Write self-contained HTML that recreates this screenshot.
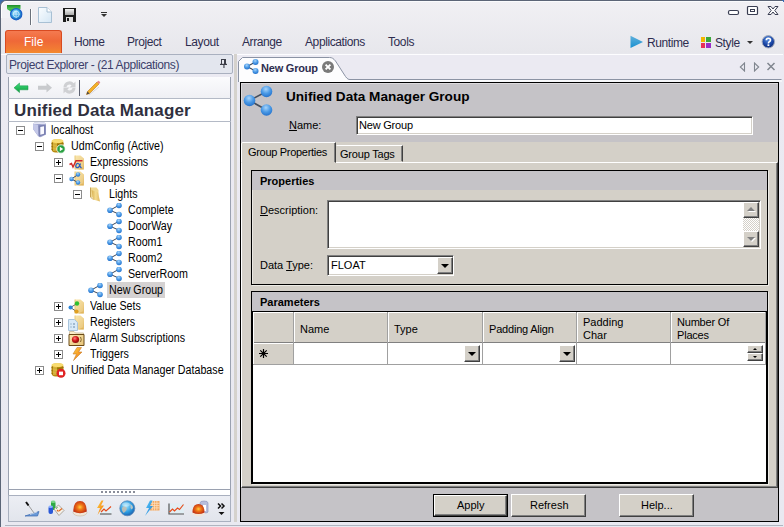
<!DOCTYPE html>
<html><head><meta charset="utf-8">
<style>
*{margin:0;padding:0;box-sizing:border-box}
html,body{width:784px;height:527px;overflow:hidden;background:#e9ebf2;font-family:"Liberation Sans",sans-serif;font-size:11px;color:#000}
.a{position:absolute}
.t{position:absolute;white-space:nowrap;line-height:12px}
#win{left:0;top:0;width:784px;height:527px;background:linear-gradient(#f1f0f4,#e7e7ec 53px,#ebeaf2 55px,#e9e9f1);}
.rt{position:absolute;top:35px;font-size:12px;line-height:14px;color:#2e2d4f;white-space:nowrap;letter-spacing:-0.4px}
.tr{position:absolute;white-space:nowrap;font-size:12px;line-height:12px;color:#000;transform:scaleX(0.89);transform-origin:0 0;margin-top:-1px;margin-left:-0.5px}
.bx{position:absolute;width:9px;height:9px;border:1px solid #8c8c8c;background:#fff}
.bx:before{content:"";position:absolute;left:1px;top:3px;width:5px;height:1px;background:#000}
.bx.p:after{content:"";position:absolute;left:3px;top:1px;width:1px;height:5px;background:#000}
.btn3d{position:absolute;background:#d4d0c8;border:1px solid;border-color:#fff #404040 #404040 #fff;box-shadow:inset -1px -1px 0 #808080}
.sunk{position:absolute;background:#fff;border:1px solid;border-color:#808080 #fff #fff #808080;box-shadow:inset 1px 1px 0 #404040,inset -1px -1px 0 #d4d0c8}
</style></head><body>
<div id="win" class="a"></div>
<svg width="0" height="0" style="position:absolute"><defs><radialGradient id="gb" cx="0.45" cy="0.3" r="0.75"><stop offset="0" stop-color="#a8d4fa"/><stop offset="0.5" stop-color="#4b9ae6"/><stop offset="1" stop-color="#1f6cc8"/></radialGradient><radialGradient id="gr" cx="0.5" cy="0.5" r="0.6"><stop offset="0" stop-color="#ffd040"/><stop offset="0.35" stop-color="#f07818"/><stop offset="1" stop-color="#b82010"/></radialGradient><linearGradient id="go" x1="0" y1="0" x2="1" y2="1"><stop offset="0" stop-color="#ffd040"/><stop offset="1" stop-color="#f07010"/></linearGradient><linearGradient id="gbl" x1="0" y1="0" x2="1" y2="1"><stop offset="0" stop-color="#60d0ff"/><stop offset="1" stop-color="#1878d0"/></linearGradient><radialGradient id="gg" cx="0.4" cy="0.35" r="0.7"><stop offset="0" stop-color="#a8e8ff"/><stop offset="0.6" stop-color="#2a9ae0"/><stop offset="1" stop-color="#1a5aa8"/></radialGradient><linearGradient id="gf" x1="0" y1="0" x2="1" y2="1"><stop offset="0" stop-color="#fae8b0"/><stop offset="1" stop-color="#e8c478"/></linearGradient><linearGradient id="gf2" x1="0" y1="0" x2="1" y2="0"><stop offset="0" stop-color="#d8b050"/><stop offset="0.5" stop-color="#f4dc90"/><stop offset="1" stop-color="#e0b860"/></linearGradient><radialGradient id="gred" cx="0.4" cy="0.35" r="0.7"><stop offset="0" stop-color="#ff8080"/><stop offset="0.5" stop-color="#d01818"/><stop offset="1" stop-color="#800808"/></radialGradient></defs></svg>
<!-- window border -->
<div class="a" style="left:0;top:0;width:8px;height:8px;background:#3a6cb0"></div>
<div class="a" style="left:0;top:0;width:18px;height:18px;background:#f0f1f5;border-top-left-radius:6px;border-top:1px solid #5b6577;border-left:1px solid #5b6577;box-shadow:inset 1px 1px 0 #fff"></div>
<div class="a" style="left:0;top:8px;width:1px;height:519px;background:#5b6577"></div>
<div class="a" style="left:8px;top:0;width:774px;height:1px;background:#5b6577"></div>
<div class="a" style="left:782px;top:0;width:2px;height:2px;background:#3a6cb0"></div>

<!-- quick access -->
<svg class="a" style="left:7px;top:5px" width="17" height="16">
<defs><linearGradient id="ggr" x1="0" y1="0" x2="0" y2="1"><stop offset="0" stop-color="#1c8a2a"/><stop offset="1" stop-color="#50c850"/></linearGradient></defs>
<rect x="0" y="0" width="13.5" height="4" fill="url(#ggr)"/>
<path d="M0 4H6V8Z" fill="#3ab84a"/>
<circle cx="9.2" cy="9.2" r="5.6" fill="url(#gg)" stroke="#1a60c8" stroke-width="1.2"/>
<circle cx="9.2" cy="9.2" r="3" fill="none" stroke="#e8f4ff" stroke-width="0.9" opacity="0.8"/>
<path d="M9.2 5.5V13M5.5 9.2H13" stroke="#e8f4ff" stroke-width="0.7" opacity="0.7"/>
</svg>
<div class="a" style="left:30px;top:9px;width:1px;height:16px;background:#6a707a"></div>
<div class="a" style="left:31px;top:9px;width:1px;height:16px;background:#fff"></div>
<svg class="a" style="left:38px;top:7px" width="14" height="16"><path d="M0.5 0.5H9L13.5 5V15.5H0.5Z" fill="url(#gdoc)" stroke="#a8c0d4" stroke-width="1"/><path d="M9 0.5V5H13.5" fill="#fff" stroke="#a8c0d4" stroke-width="1"/>
<defs><linearGradient id="gdoc" x1="0" y1="0" x2="1" y2="1"><stop offset="0" stop-color="#fafdff"/><stop offset="1" stop-color="#d4e6f4"/></linearGradient></defs></svg>
<svg class="a" style="left:63px;top:8px" width="14" height="14"><path d="M0 0H13V14H0Z" fill="#1c1c1c"/><rect x="2" y="1" width="9" height="6" fill="url(#gsv)"/><rect x="3" y="9" width="7" height="5" fill="#e0e0e0"/><rect x="4" y="10" width="2" height="3" fill="#1c1c1c"/>
<defs><linearGradient id="gsv" x1="0" y1="0" x2="0" y2="1"><stop offset="0" stop-color="#f4f4f4"/><stop offset="1" stop-color="#a8a8a8"/></linearGradient></defs></svg>
<div class="a" style="left:101px;top:12px;width:6px;height:1px;background:#333"></div>
<div class="a" style="left:101px;top:14px;width:0;height:0;border-left:3px solid transparent;border-right:3px solid transparent;border-top:3px solid #333"></div>

<!-- window controls -->
<svg class="a" style="left:727px;top:5px" width="54" height="12">
<rect x="1.5" y="5.5" width="10" height="4" rx="1.5" fill="#fff" stroke="#3a3e52" stroke-width="1.2"/>
<rect x="20.5" y="1.5" width="10" height="8" rx="1" fill="#fff" stroke="#3a3e52" stroke-width="1.2"/>
<rect x="23.5" y="4.5" width="4" height="2" fill="#fff" stroke="#3a3e52" stroke-width="1"/>
<path d="M41 1.5H44L46 4L48 1.5H51L47.8 5.5L51 9.5H48L46 7L44 9.5H41L44.2 5.5Z" fill="#fff" stroke="#3a3e52" stroke-width="1" stroke-linejoin="round"/>
</svg>
<div class="a" style="left:8px;top:1px;width:775px;height:1px;background:#fafbfd"></div>

<!-- ribbon tabs -->
<div class="a" style="left:5px;top:30px;width:57px;height:23px;border-radius:3px 3px 0 0;background:linear-gradient(#f47a50,#ef6838 45%,#f27a34 80%,#f48a2c);border:1px solid #d84a20;border-bottom:none"></div>
<div class="rt" style="left:24px;color:#fff;letter-spacing:0">File</div>
<div class="rt" style="left:74px">Home</div>
<div class="rt" style="left:127px">Project</div>
<div class="rt" style="left:185px">Layout</div>
<div class="rt" style="left:242px">Arrange</div>
<div class="rt" style="left:305px">Applications</div>
<div class="rt" style="left:388px">Tools</div>
<svg class="a" style="left:630px;top:35px" width="14" height="14"><defs><linearGradient id="gpl" x1="0" y1="0" x2="0" y2="1"><stop offset="0" stop-color="#60b0dc"/><stop offset="1" stop-color="#1890d0"/></linearGradient></defs><path d="M0.5 0.8L13 6.9L0.5 13Z" fill="url(#gpl)"/></svg>
<div class="rt" style="left:647px;top:36px">Runtime</div>
<div class="a" style="left:701px;top:37px;width:4px;height:5px;background:#f2b600"></div>
<div class="a" style="left:706px;top:37px;width:5px;height:5px;background:#3aa83a"></div>
<div class="a" style="left:701px;top:43px;width:4px;height:5px;background:#e8305a"></div>
<div class="a" style="left:706px;top:43px;width:5px;height:5px;background:#9a2ec8"></div>
<div class="rt" style="left:715px;top:36px">Style</div>
<div class="a" style="left:747px;top:41px;width:0;height:0;border-left:3px solid transparent;border-right:3px solid transparent;border-top:3px solid #333"></div>
<svg class="a" style="left:761px;top:35px" width="15" height="14"><defs><radialGradient id="ghp" cx="0.45" cy="0.3" r="0.7"><stop offset="0" stop-color="#5a90e0"/><stop offset="0.6" stop-color="#1c48a8"/><stop offset="1" stop-color="#0c2a78"/></radialGradient></defs><circle cx="7.3" cy="6.8" r="6.2" fill="url(#ghp)" stroke="#a4acbc" stroke-width="1"/><path d="M5.3 5.2Q5.3 3.2 7.4 3.2Q9.5 3.2 9.5 5Q9.5 6.2 8.3 6.8Q7.4 7.3 7.4 8.4" stroke="#fff" stroke-width="1.6" fill="none"/><rect x="6.5" y="9.3" width="1.8" height="1.7" fill="#fff"/></svg>

<div class="a" style="left:1px;top:54px;width:782px;height:1px;background:#fdfdff"></div>
<!-- ===== LEFT PANEL ===== -->
<div class="a" style="left:6px;top:54px;width:227px;height:20px;background:#e3e6ee;border:1px solid #a9b0bf;border-radius:2px"></div>
<div class="t" style="left:9px;top:58px;font-size:12px;line-height:14px;color:#3c3e6a;letter-spacing:-0.41px">Project Explorer - (21 Applications)</div>
<svg class="a" style="left:219px;top:58px" width="9" height="11"><path d="M2 1H7V6H2Z" fill="#3c3e48"/><rect x="3" y="2" width="2" height="4" fill="#e6e8f0"/><rect x="1" y="5.8" width="7" height="1.2" fill="#3c3e48"/><rect x="4.4" y="7" width="1.1" height="3" fill="#3c3e48"/></svg>
<div class="a" style="left:234px;top:54px;width:3px;height:468px;background:#d5d2cd"></div>

<!-- panel body -->
<div class="a" style="left:8px;top:77px;width:223px;height:419px;background:#fff;border-left:1px solid #9aa1b0;border-right:1px solid #9aa1b0"></div>
<div class="a" style="left:9px;top:77px;width:221px;height:21px;background:linear-gradient(#fbfbfd,#eff0f4)"></div>
<div class="a" style="left:8px;top:98px;width:223px;height:1px;background:#b4bac6"></div>
<!-- toolbar icons -->
<svg class="a" style="left:13px;top:82px" width="17" height="12"><defs><linearGradient id="gar" x1="0" y1="0" x2="0" y2="1"><stop offset="0" stop-color="#40e080"/><stop offset="1" stop-color="#0c9a3a"/></linearGradient></defs><path d="M1 5.8L6.5 1V3.8H15V7.8H6.5V10.6Z" fill="url(#gar)" stroke="#139444" stroke-width="0.5"/></svg>
<svg class="a" style="left:37px;top:82px" width="16" height="12"><path d="M15 5.8L9.5 1V3.8H1V7.8H9.5V10.6Z" fill="#c8cacd"/></svg>
<svg class="a" style="left:61px;top:79px" width="17" height="17"><path d="M2.5 8A6 6 0 0 1 12.8 4.2L14.5 2.5V8.5H8.5L10.6 6.4A3 3 0 0 0 5.5 8Z" fill="#cfd0d3"/><path d="M14.5 9A6 6 0 0 1 4.2 12.8L2.5 14.5V8.5H8.5L6.4 10.6A3 3 0 0 0 11.5 9Z" fill="#cfd0d3"/></svg>
<div class="a" style="left:79px;top:80px;width:1px;height:16px;background:#5c6070"></div>
<svg class="a" style="left:85px;top:80px" width="16" height="16"><path d="M1.5 14.5L2.5 11.5L12 2L14 4L4.5 13.5Z" fill="#f4b028" stroke="#c07818" stroke-width="0.6"/><path d="M12 2L13 1Q13.6 0.6 14.2 1.2L15 2Q15.4 2.6 15 3L14 4Z" fill="#e88a8a"/><path d="M1.5 14.5L2.5 11.5L4.5 13.5Z" fill="#4a4a4a"/><path d="M4 15L14 7" stroke="#d8d8de" stroke-width="1"/></svg>

<div class="t" style="left:14px;top:101px;font-size:17px;line-height:19px;font-weight:bold;color:#30303e;letter-spacing:0.15px">Unified Data Manager</div>
<div class="a" style="left:8px;top:121px;width:223px;height:1px;background:#b4bac6"></div>

<!-- tree -->
<div class="bx" style="left:16px;top:126px"></div>
<svg class="a" style="left:32px;top:121px" width="15" height="17">
<path d="M1 3Q1 1 7 1Q14 1 14 3V13.5L9 16Q7 16.5 6 15L1 8Z" fill="#9aa0cc"/>
<path d="M1 3Q1 1 7 1Q14 1 14 3L13.5 3.5Q7 2.5 1.5 3.5Z" fill="#e4e6f4"/>
<path d="M1 3.2L1.2 8L6.2 15L6 4Z" fill="#c4c8e8"/>
<path d="M6.5 4.5L13.5 3.5V13.5L7 15.5Z" fill="#7c82b2"/>
<path d="M8.3 6L12 5.3V12.8L8.3 13.8Z" fill="#fafaff"/>
</svg>
<div class="tr" style="left:51px;top:125px">localhost</div>

<div class="bx" style="left:35px;top:142px"></div>
<svg class="a" style="left:51px;top:138px" width="15" height="16">
<rect x="0.5" y="1.5" width="12" height="13" rx="4" fill="#b88a10"/>
<ellipse cx="6.5" cy="3" rx="6" ry="2" fill="#f8dc70"/>
<path d="M0.5 5.5Q6.5 8 12.5 5.5M0.5 8.5Q6.5 11 12.5 8.5M0.5 11.5Q6.5 14 12.5 11.5" stroke="#8a6a08" stroke-width="0.8" fill="none"/>
<rect x="2" y="4" width="4" height="9" fill="#f8d860" opacity="0.55"/>
<circle cx="10" cy="11" r="4.2" fill="#28a040" stroke="#fff" stroke-width="0.8"/>
<path d="M8.8 8.8L12.2 11L8.8 13.2Z" fill="#fff"/>
</svg>
<div class="tr" style="left:71px;top:141px">UdmConfig (Active)</div>

<div class="bx p" style="left:54px;top:158px"></div>
<svg class="a" style="left:74px;top:155px" width="11" height="15"><path d="M1 0.5H6.5L10 3.5V14.5H1Z" fill="url(#gf)"/><path d="M9.5 3.5V14.5H4L10 12Z" fill="#d8a848" opacity="0.6"/><path d="M1 0.5V14.5" stroke="#e8c878" stroke-width="1"/></svg>
<svg class="a" style="left:69px;top:160px" width="14" height="9"><path d="M0.5 4.5L2.5 3.5L4 7L7 0.8H13.5" stroke="#d02828" stroke-width="1.4" fill="none"/><path d="M11.5 3.5Q10 8.5 7.5 7.5Q6 6.5 7.5 4Q9.5 2.5 10.5 5Q11 7 12.5 8" stroke="#2a5cc0" stroke-width="1.2" fill="none"/></svg>
<div class="tr" style="left:90px;top:157px">Expressions</div>

<div class="bx" style="left:54px;top:174px"></div>
<svg class="a" style="left:74px;top:171px" width="11" height="15"><path d="M1 0.5H6.5L10 3.5V14.5H1Z" fill="url(#gf)"/><path d="M9.5 3.5V14.5H4L10 12Z" fill="#d8a848" opacity="0.6"/><path d="M1 0.5V14.5" stroke="#e8c878" stroke-width="1"/></svg>
<svg class="a" style="left:69px;top:172px" width="12" height="13"><path d="M2.5 7L9 2.5M2.5 7L9 10.5" stroke="#3a4658" stroke-width="1"/><circle cx="2.5" cy="7" r="2.2" fill="url(#gb)"/><circle cx="9" cy="2.5" r="2.2" fill="url(#gb)"/><circle cx="9" cy="10.5" r="2.2" fill="url(#gb)"/></svg>
<div class="tr" style="left:90px;top:173px">Groups</div>

<div class="bx" style="left:73px;top:190px"></div>
<svg class="a" style="left:89px;top:187px" width="12" height="15"><path d="M1.5 0.5H7.5L9.5 3V12L1.5 10Z" fill="#f0d890"/><path d="M2.5 3L9 5.5L11 14.5L4 12.5Z" fill="url(#gf2)"/><path d="M1.5 0.5V10L4 12.5" stroke="#b89038" stroke-width="0.8" fill="none"/></svg>
<div class="tr" style="left:109px;top:189px">Lights</div>

<!-- group icons -->
<svg class="a" style="left:106px;top:203px" width="16" height="15"><path d="M4 7.2L13 2.2M4 7.2L13 11.2" stroke="#3a4658" stroke-width="1"/><circle cx="4" cy="7.2" r="2.8" fill="url(#gb)"/><circle cx="13" cy="2.5" r="2.8" fill="url(#gb)"/><circle cx="13" cy="11.5" r="2.8" fill="url(#gb)"/></svg>
<div class="tr" style="left:128px;top:205px">Complete</div>
<svg class="a" style="left:106px;top:219px" width="16" height="15"><path d="M4 7.2L13 2.2M4 7.2L13 11.2" stroke="#3a4658" stroke-width="1"/><circle cx="4" cy="7.2" r="2.8" fill="url(#gb)"/><circle cx="13" cy="2.5" r="2.8" fill="url(#gb)"/><circle cx="13" cy="11.5" r="2.8" fill="url(#gb)"/></svg>
<div class="tr" style="left:128px;top:221px">DoorWay</div>
<svg class="a" style="left:106px;top:235px" width="16" height="15"><path d="M4 7.2L13 2.2M4 7.2L13 11.2" stroke="#3a4658" stroke-width="1"/><circle cx="4" cy="7.2" r="2.8" fill="url(#gb)"/><circle cx="13" cy="2.5" r="2.8" fill="url(#gb)"/><circle cx="13" cy="11.5" r="2.8" fill="url(#gb)"/></svg>
<div class="tr" style="left:128px;top:237px">Room1</div>
<svg class="a" style="left:106px;top:251px" width="16" height="15"><path d="M4 7.2L13 2.2M4 7.2L13 11.2" stroke="#3a4658" stroke-width="1"/><circle cx="4" cy="7.2" r="2.8" fill="url(#gb)"/><circle cx="13" cy="2.5" r="2.8" fill="url(#gb)"/><circle cx="13" cy="11.5" r="2.8" fill="url(#gb)"/></svg>
<div class="tr" style="left:128px;top:253px">Room2</div>
<svg class="a" style="left:106px;top:267px" width="16" height="15"><path d="M4 7.2L13 2.2M4 7.2L13 11.2" stroke="#3a4658" stroke-width="1"/><circle cx="4" cy="7.2" r="2.8" fill="url(#gb)"/><circle cx="13" cy="2.5" r="2.8" fill="url(#gb)"/><circle cx="13" cy="11.5" r="2.8" fill="url(#gb)"/></svg>
<div class="tr" style="left:128px;top:269px">ServerRoom</div>

<div class="a" style="left:107px;top:282px;width:58px;height:16px;background:#d5d2d2"></div>
<svg class="a" style="left:87px;top:283px" width="16" height="15"><path d="M4 7.2L13 2.2M4 7.2L13 11.2" stroke="#3a4658" stroke-width="1"/><circle cx="4" cy="7.2" r="2.8" fill="url(#gb)"/><circle cx="13" cy="2.5" r="2.8" fill="url(#gb)"/><circle cx="13" cy="11.5" r="2.8" fill="url(#gb)"/></svg>
<div class="tr" style="left:109px;top:285px">New Group</div>

<div class="bx p" style="left:54px;top:302px"></div>
<svg class="a" style="left:74px;top:299px" width="11" height="15"><path d="M1 0.5H6.5L10 3.5V14.5H1Z" fill="url(#gf)"/><path d="M9.5 3.5V14.5H4L10 12Z" fill="#d8a848" opacity="0.6"/><path d="M1 0.5V14.5" stroke="#e8c878" stroke-width="1"/></svg>
<svg class="a" style="left:68px;top:300px" width="12" height="15"><path d="M2.5 7.5L9 3.5M2.5 7.5L8.5 11.5" stroke="#555" stroke-width="0.9"/><circle cx="2.6" cy="7.5" r="2.1" fill="#2f86d8"/><circle cx="9" cy="3.5" r="2.2" fill="#30c030"/><circle cx="8.5" cy="11.5" r="2.1" fill="#e0a020"/></svg>
<div class="tr" style="left:90px;top:301px">Value Sets</div>

<div class="bx p" style="left:54px;top:318px"></div>
<svg class="a" style="left:74px;top:315px" width="11" height="15"><path d="M1 0.5H6.5L10 3.5V14.5H1Z" fill="url(#gf)"/><path d="M9.5 3.5V14.5H4L10 12Z" fill="#d8a848" opacity="0.6"/><path d="M1 0.5V14.5" stroke="#e8c878" stroke-width="1"/></svg>
<svg class="a" style="left:68px;top:319px" width="10" height="12"><path d="M0.5 0.5H6.5L9.5 3.5V11.5H0.5Z" fill="#d8eaf8" stroke="#a8c4dc" stroke-width="1"/><path d="M2.5 5H3.5M5 5H7M2.5 8H3.5M5 8H7" stroke="#6a8aa8" stroke-width="1"/></svg>
<div class="tr" style="left:90px;top:317px">Registers</div>

<div class="bx p" style="left:54px;top:334px"></div>
<svg class="a" style="left:68px;top:330px" width="17" height="16"><path d="M1.5 1.5H6L7.5 3H15.5V14.5H1.5Z" fill="#fbeec8" stroke="#c8b898" stroke-width="0.8"/><path d="M1 4.5H16V15.5H1Z" fill="url(#gf)" stroke="#6a4a18" stroke-width="1"/><circle cx="7.5" cy="9.5" r="3.6" fill="url(#gred)"/><path d="M12.5 7Q14 9.5 12.5 12" stroke="#6a4a18" stroke-width="0.8" fill="none"/></svg>
<div class="tr" style="left:90px;top:333px">Alarm Subscriptions</div>

<div class="bx p" style="left:54px;top:350px"></div>
<svg class="a" style="left:72px;top:347px" width="11" height="14"><path d="M5 0.5L1 7H4.5L1.5 13.5L10 5H6.5L9.5 0.5Z" fill="url(#go)" stroke="#c88030" stroke-width="0.6" stroke-linejoin="round"/></svg>
<div class="tr" style="left:90px;top:349px">Triggers</div>

<div class="bx p" style="left:35px;top:366px"></div>
<svg class="a" style="left:51px;top:362px" width="15" height="16">
<rect x="0.5" y="1.5" width="12" height="13" rx="4" fill="#b88a10"/>
<ellipse cx="6.5" cy="3" rx="6" ry="2" fill="#f8dc70"/>
<path d="M0.5 5.5Q6.5 8 12.5 5.5M0.5 8.5Q6.5 11 12.5 8.5M0.5 11.5Q6.5 14 12.5 11.5" stroke="#8a6a08" stroke-width="0.8" fill="none"/>
<rect x="2" y="4" width="4" height="9" fill="#f8d860" opacity="0.55"/>
<circle cx="10" cy="11.2" r="4.5" fill="#e02424"/><rect x="8" y="9.6" width="4" height="3.6" fill="#fff"/>
</svg>
<div class="tr" style="left:71px;top:365px">Unified Data Manager Database</div>

<!-- bottom toolbar -->
<div class="a" style="left:9px;top:489px;width:221px;height:1px;background:#9aa1b0"></div>
<div class="a" style="left:101px;top:491px;width:34px;height:2px;background:repeating-linear-gradient(90deg,#8a8e9a 0 2px,transparent 2px 4px)"></div>
<div class="a" style="left:8px;top:495px;width:223px;height:27px;background:linear-gradient(#eceef4,#e2e5ec);border:1px solid #a9b0bf"></div>
<div class="a" style="left:5px;top:525px;width:778px;height:1px;background:#b0b5c0"></div>
<!-- toolbar icons -->
<svg class="a" style="left:24px;top:501px" width="16" height="16">
<path d="M2.5 1.5L10 12" stroke="#9a9a9a" stroke-width="1"/><path d="M2 1L4.5 4.5" stroke="#111" stroke-width="2"/>
<path d="M1 15L15 10.5L13.5 15Z" fill="#6a9ad8" stroke="#3a68b0" stroke-width="0.7"/><path d="M6 13.5L13 11" stroke="#fff" stroke-width="0.6"/>
</svg>
<svg class="a" style="left:48px;top:500px" width="17" height="17">
<rect x="3" y="1" width="4.5" height="9" rx="2" fill="#2eaa44"/><ellipse cx="5.2" cy="1.8" rx="2.2" ry="1.2" fill="#7ad88a"/>
<rect x="0.5" y="6" width="4.5" height="8" rx="2" fill="#2a58d8"/><ellipse cx="2.7" cy="6.8" rx="2.2" ry="1.2" fill="#8ab0ff"/>
<path d="M6 9L10.5 5L16 10.5L11 15.5Z" fill="#f4f0e8" stroke="#9a948a" stroke-width="0.8"/><path d="M9 10L10.5 11.5M11 11L14 8.5" stroke="#e06a20" stroke-width="1.1"/><path d="M8 8.5L9.5 7.5" stroke="#3aa040" stroke-width="1"/>
</svg>
<svg class="a" style="left:72px;top:500px" width="16" height="17">
<ellipse cx="8" cy="12.5" rx="7" ry="3.5" fill="#f2e6d8" stroke="#c8b8a0" stroke-width="0.6"/>
<path d="M1.3 11.5Q1.3 1 8 1Q14.7 1 14.7 11.5Q8 15 1.3 11.5Z" fill="url(#gr)"/>
</svg>
<svg class="a" style="left:96px;top:500px" width="16" height="16">
<rect x="4" y="6.5" width="11.5" height="7.5" fill="#e4f0f6"/><path d="M4 14H15.5" stroke="#606060" stroke-width="1.2"/>
<path d="M5 12L8 9L10 11L15 6.5" stroke="#e84a1a" stroke-width="1.2" fill="none"/>
<path d="M5.5 0.5L1 8H4L1.5 15L8 5.5H5L7.5 0.5Z" fill="url(#go)"/>
</svg>
<svg class="a" style="left:119px;top:500px" width="17" height="17">
<circle cx="8.3" cy="8.3" r="7.5" fill="url(#gg)" stroke="#5a88b8" stroke-width="0.8"/>
<path d="M3 8Q5 5 7 7T6 12L4.5 13Q2.5 11 3 8Z" fill="#c8c0b0" opacity="0.85"/><path d="M11 4Q14 5 14 8L12.5 9.5Q11 8 11.5 6Z" fill="#d8d0c0" opacity="0.8"/>
<ellipse cx="7" cy="4.5" rx="4" ry="2" fill="#fff" opacity="0.35"/>
</svg>
<svg class="a" style="left:144px;top:500px" width="16" height="17">
<rect x="6" y="1" width="9.5" height="9.5" fill="#f2a860"/><path d="M8.3 1V10.5M10.6 1V10.5M12.9 1V10.5M6 3.3H15.5M6 5.6H15.5M6 7.9H15.5" stroke="#fde0c0" stroke-width="0.8"/>
<path d="M6 0.5L2 8H5L1 16L9 6H6L8.5 0.5Z" fill="url(#gbl)"/>
</svg>
<svg class="a" style="left:168px;top:502px" width="17" height="14">
<rect x="1" y="1.5" width="15" height="10" fill="#e0eef4"/><path d="M1 1.5V12H16" stroke="#555" stroke-width="1.2" fill="none"/>
<path d="M1.5 10L4.5 7L6.5 9L9.5 6L11.5 7.5L15.5 2.5" stroke="#e84a1a" stroke-width="1.2" fill="none"/>
</svg>
<svg class="a" style="left:192px;top:500px" width="17" height="17">
<path d="M8 3Q8 1 12 1Q16 1 16 3V12Q16 13 12 13Q8 13 8 12Z" fill="#b8bedc" stroke="#8890b8" stroke-width="0.6"/><rect x="11" y="5" width="3" height="6" fill="#fff"/>
<ellipse cx="6.5" cy="13.3" rx="6.3" ry="3.2" fill="#f2e6d8"/>
<path d="M0.5 12.5Q0.5 4 6.5 4Q12.5 4 12.5 12.5Q6.5 15.5 0.5 12.5Z" fill="url(#gr)"/>
</svg>
<svg class="a" style="left:217px;top:502px" width="9" height="14">
<path d="M1 1.5L3.5 4L1 6.5M4.5 1.5L7 4L4.5 6.5" stroke="#111" stroke-width="1.5" fill="none"/>
<path d="M1.5 10H7.5L4.5 13Z" fill="#111"/>
</svg>
<!-- ===== RIGHT DOCUMENT ===== -->
<!-- tab strip -->
<div class="a" style="left:238px;top:55px;width:544px;height:27px;background:#ebeaf2"></div>
<div class="a" style="left:238px;top:80px;width:544px;height:2px;background:#f6f7fa"></div>
<svg class="a" style="left:238px;top:56px" width="544" height="26"><path d="M0.5 26V5.5L4.5 1.5H91.5C94 1.5 95.5 2.5 97.5 5L107.5 20.5C109.5 23.2 110.5 23.5 112 23.5H543.5" fill="#fdfdfe" stroke="#8b93a4" stroke-width="1"/><path d="M1 24H111V26H1Z" fill="#fdfdfe"/></svg>
<svg class="a" style="left:243px;top:59px" width="16" height="15"><path d="M4 7.5L12.5 3M4 7.5L12.5 12" stroke="#3a4658" stroke-width="1.1"/><circle cx="4" cy="7.5" r="3" fill="url(#gb)"/><circle cx="12.5" cy="3" r="3" fill="url(#gb)"/><circle cx="12.5" cy="12" r="3" fill="url(#gb)"/></svg>
<div class="t" style="left:261px;top:62px;font-weight:bold;font-size:11px;color:#2e2d4f;letter-spacing:-0.2px">New Group</div>
<svg class="a" style="left:322px;top:61px" width="12" height="12"><circle cx="6" cy="6" r="6" fill="#7a7a7a"/><path d="M3.6 3.6L8.4 8.4M8.4 3.6L3.6 8.4" stroke="#fff" stroke-width="1.9"/></svg>
<svg class="a" style="left:739px;top:62px" width="7" height="10"><path d="M5.5 1V9L1.3 5Z" fill="none" stroke="#80868f" stroke-width="1.1"/></svg>
<svg class="a" style="left:753px;top:62px" width="7" height="10"><path d="M1.5 1V9L5.7 5Z" fill="none" stroke="#80868f" stroke-width="1.1"/></svg>
<svg class="a" style="left:766px;top:62px" width="10" height="9"><path d="M1.5 1L8.5 8M8.5 1L1.5 8" stroke="#80868f" stroke-width="1.5"/></svg>

<!-- content frame -->
<div class="a" style="left:240px;top:82px;width:539px;height:440px;background:#c5c3c7;border:1px solid #000"></div>
<div class="a" style="left:241px;top:83px;width:537px;height:1px;background:#dcdadd"></div>
<div class="a" style="left:241px;top:83px;width:1px;height:59px;background:#dcdadd"></div>

<!-- header -->
<svg class="a" style="left:243px;top:84px" width="34" height="34"><path d="M6.5 16.5L23.5 7.5M6.5 16.5L23.5 26" stroke="#454e5c" stroke-width="1.6"/><circle cx="6.5" cy="16.5" r="5.8" fill="url(#gb)"/><circle cx="23.5" cy="7.5" r="5.8" fill="url(#gb)"/><circle cx="23.5" cy="26" r="5.8" fill="url(#gb)"/></svg>
<div class="t" style="left:286px;top:89px;font-size:13.6px;line-height:15px;font-weight:bold;color:#000">Unified Data Manager Group</div>
<div class="t" style="left:289px;top:119px;font-size:11px"><u>N</u>ame:</div>
<div class="sunk" style="left:356px;top:116px;width:397px;height:19px"></div>
<div class="t" style="left:359px;top:119px;font-size:11px;letter-spacing:-0.2px">New Group</div>

<!-- tab control -->
<div class="a" style="left:241px;top:142px;width:537px;height:346px;background:#d4d0c8"></div>
<div class="a" style="left:241px;top:162px;width:537px;height:326px;border-left:1px solid #fff;border-top:1px solid #fff;border-right:1px solid #404040;border-bottom:1px solid #404040;box-shadow:inset -1px -1px 0 #808080"></div>
<div class="a" style="left:241px;top:142px;width:95px;height:21px;background:#d4d0c8;border:1px solid;border-color:#fff #404040 transparent #fff;border-radius:2px 0 0 0;box-shadow:inset -1px 0 0 #808080"></div>
<div class="t" style="left:248px;top:146px;font-size:11px;letter-spacing:-0.3px">Group Properties</div>
<div class="a" style="left:336px;top:145px;width:67px;height:17px;background:#d4d0c8;border:1px solid;border-color:#fff #404040 transparent transparent;box-shadow:inset -1px 0 0 #808080"></div>
<div class="t" style="left:340px;top:148px;font-size:11px;letter-spacing:-0.2px">Group Tags</div>

<!-- properties groupbox -->
<div class="a" style="left:251px;top:170px;width:517px;height:115px;border:1px solid #000;box-shadow:inset 1px 1px 0 #e9e7e2,1px 1px 0 #ecebe6"></div>
<div class="a" style="left:252px;top:171px;width:515px;height:19px;background:#c5c3c7"></div>
<div class="t" style="left:260px;top:175px;font-size:11px;font-weight:bold">Properties</div>
<div class="t" style="left:260px;top:204px;font-size:11px"><u>D</u>escription:</div>
<div class="sunk" style="left:327px;top:200px;width:434px;height:49px"></div>
<!-- scrollbar -->
<div class="a" style="left:743px;top:202px;width:16px;height:45px;background:repeating-conic-gradient(#d4d0c8 0 25%,#fff 0 50%) 0 0/2px 2px"></div>
<div class="btn3d" style="left:743px;top:202px;width:16px;height:16px"></div>
<div class="a" style="left:748px;top:208px;width:0;height:0;border-left:4px solid transparent;border-right:4px solid transparent;border-bottom:4px solid #fff"></div>
<div class="a" style="left:747px;top:207px;width:0;height:0;border-left:4px solid transparent;border-right:4px solid transparent;border-bottom:4px solid #808080"></div>
<div class="btn3d" style="left:743px;top:231px;width:16px;height:16px"></div>
<div class="a" style="left:748px;top:238px;width:0;height:0;border-left:4px solid transparent;border-right:4px solid transparent;border-top:4px solid #fff"></div>
<div class="a" style="left:747px;top:237px;width:0;height:0;border-left:4px solid transparent;border-right:4px solid transparent;border-top:4px solid #808080"></div>

<div class="t" style="left:260px;top:259px;font-size:11px">Data <u>T</u>ype:</div>
<div class="sunk" style="left:327px;top:255px;width:127px;height:21px"></div>
<div class="t" style="left:331px;top:259px;font-size:11px">FLOAT</div>
<div class="btn3d" style="left:437px;top:257px;width:16px;height:17px"></div>
<div class="a" style="left:441px;top:264px;width:0;height:0;border-left:4px solid transparent;border-right:4px solid transparent;border-top:4px solid #000"></div>

<!-- parameters groupbox -->
<div class="a" style="left:251px;top:291px;width:517px;height:193px;border:1px solid #000;box-shadow:1px 1px 0 #ecebe6"></div>
<div class="a" style="left:252px;top:292px;width:515px;height:19px;background:#c5c3c7"></div>
<div class="a" style="left:252px;top:311px;width:515px;height:1px;background:#000"></div>
<div class="a" style="left:252px;top:312px;width:1px;height:171px;background:#000"></div>
<div class="a" style="left:252px;top:482px;width:515px;height:1px;background:#000"></div>
<div class="a" style="left:766px;top:312px;width:1px;height:171px;background:#000"></div>
<div class="t" style="left:260px;top:296px;font-size:11px;font-weight:bold">Parameters</div>
<div class="a" style="left:253px;top:312px;width:513px;height:170px;background:#fff"></div>
<!-- grid header -->
<div class="a" style="left:253px;top:312px;width:513px;height:30px;background:#d4d0c8"></div>
<div class="a" style="left:253px;top:342px;width:513px;height:1px;background:#808080"></div>
<div class="a" style="left:253px;top:364px;width:513px;height:1px;background:#a0a0a0"></div>
<div class="a" style="left:253px;top:343px;width:40px;height:21px;background:#d4d0c8"></div>
<div class="a" style="left:253px;top:312px;width:513px;height:1px;background:#fff"></div>
<div class="a" style="left:253px;top:343px;width:40px;height:1px;background:#fff"></div>
<div class="a" style="left:253px;top:312px;width:1px;height:52px;background:#fff"></div>
<div class="a" style="left:293px;top:312px;width:1px;height:53px;background:#a0a0a0"></div>
<div class="a" style="left:294px;top:312px;width:1px;height:30px;background:#fff"></div>
<div class="a" style="left:387px;top:312px;width:1px;height:53px;background:#a0a0a0"></div>
<div class="a" style="left:388px;top:312px;width:1px;height:30px;background:#fff"></div>
<div class="a" style="left:482px;top:312px;width:1px;height:53px;background:#a0a0a0"></div>
<div class="a" style="left:483px;top:312px;width:1px;height:30px;background:#fff"></div>
<div class="a" style="left:576px;top:312px;width:1px;height:53px;background:#a0a0a0"></div>
<div class="a" style="left:577px;top:312px;width:1px;height:30px;background:#fff"></div>
<div class="a" style="left:670px;top:312px;width:1px;height:53px;background:#a0a0a0"></div>
<div class="a" style="left:671px;top:312px;width:1px;height:30px;background:#fff"></div>
<div class="a" style="left:765px;top:312px;width:1px;height:53px;background:#a0a0a0"></div>
<div class="t" style="left:300px;top:323px">Name</div>
<div class="t" style="left:394px;top:323px">Type</div>
<div class="t" style="left:489px;top:323px;letter-spacing:-0.2px">Padding Align</div>
<div class="t" style="left:583px;top:316px;line-height:13px">Padding<br>Char</div>
<div class="t" style="left:677px;top:316px;line-height:13px;letter-spacing:-0.2px">Number Of<br>Places</div>
<svg class="a" style="left:258px;top:348px" width="11" height="11"><path d="M5.5 1V10M1 5.5H10M2.3 2.3L8.7 8.7M8.7 2.3L2.3 8.7" stroke="#000" stroke-width="1.2"/></svg>
<div class="btn3d" style="left:464px;top:345px;width:16px;height:17px"></div>
<div class="a" style="left:468px;top:352px;width:0;height:0;border-left:4px solid transparent;border-right:4px solid transparent;border-top:4px solid #000"></div>
<div class="btn3d" style="left:559px;top:345px;width:16px;height:17px"></div>
<div class="a" style="left:563px;top:352px;width:0;height:0;border-left:4px solid transparent;border-right:4px solid transparent;border-top:4px solid #000"></div>
<div class="btn3d" style="left:747px;top:345px;width:16px;height:8px"></div>
<div class="btn3d" style="left:747px;top:353px;width:16px;height:8px"></div>
<div class="a" style="left:753px;top:348px;width:0;height:0;border-left:2px solid transparent;border-right:2px solid transparent;border-bottom:2px solid #000"></div>
<div class="a" style="left:753px;top:356px;width:0;height:0;border-left:2px solid transparent;border-right:2px solid transparent;border-top:2px solid #000"></div>

<!-- bottom buttons -->
<div class="a" style="left:433px;top:494px;width:75px;height:23px;border:1px solid #000"></div><div class="btn3d" style="left:434px;top:495px;width:73px;height:21px"></div>
<div class="t" style="left:457px;top:499px">Apply</div>
<div class="btn3d" style="left:511px;top:494px;width:75px;height:23px"></div>
<div class="t" style="left:530px;top:499px">Refresh</div>
<div class="btn3d" style="left:619px;top:494px;width:75px;height:23px"></div>
<div class="t" style="left:641px;top:499px">Help...</div>

</body></html>
